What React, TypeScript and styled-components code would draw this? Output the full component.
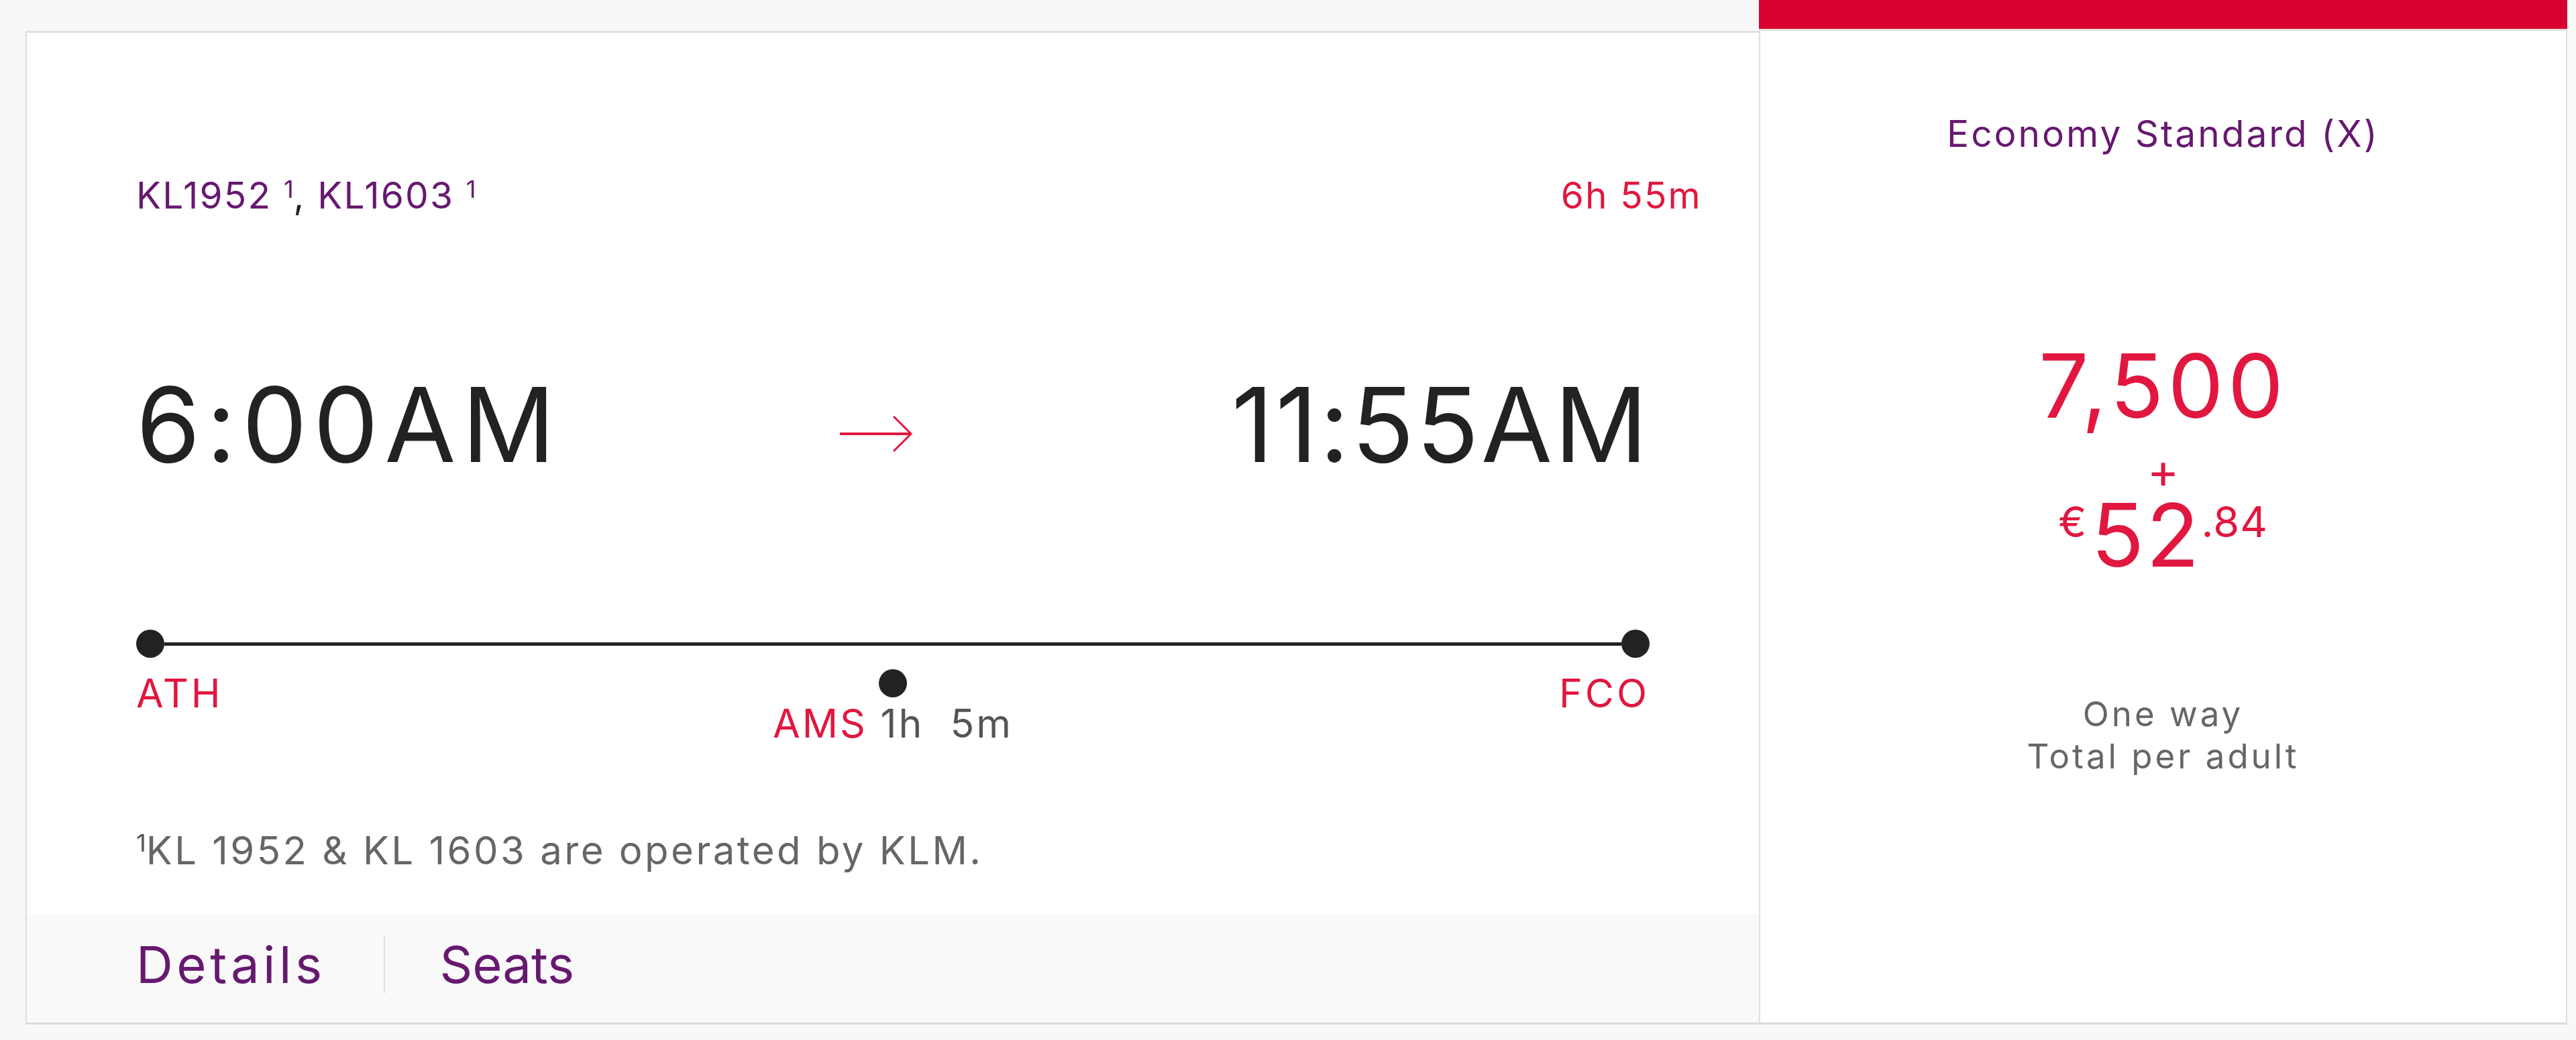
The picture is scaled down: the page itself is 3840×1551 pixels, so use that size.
import React from "react";
import styled, { createGlobalStyle } from "styled-components";

const purple = "#66196f";
const red = "#e1173f";

const GlobalStyle = createGlobalStyle`
  html, body {
    margin: 0;
    padding: 0;
    background: #f8f8f8;
  }
  body {
    font-family: Inter, "Liberation Sans", sans-serif;
  }
`;

const Page = styled.div`
  display: flex;
  align-items: flex-start;
  padding-left: 38px;
  height: 1551px;
  box-sizing: border-box;
`;

const FlightCard = styled.section`
  margin-top: 46px;
  width: 2584px;
  height: 1482px;
  box-sizing: border-box;
  background: #fff;
  border: 2px solid #dcdcdc;
  border-top: 3px solid #e0e0e0;
  border-bottom: 3px solid #dadada;
  border-right: none;
  display: flex;
  flex-direction: column;
`;

const Body = styled.div`
  padding: 215px 163px 0;
  display: flex;
  flex-direction: column;
`;

const HeaderRow = styled.div`
  display: flex;
  justify-content: space-between;
  align-items: flex-start;
  margin-right: -76px;
  font-size: 55px;
  line-height: 1;
  letter-spacing: 2.2px;
`;

const FlightNo = styled.span`
  color: ${purple};
`;

const Comma = styled.span`
  color: #222;
`;

const Sup = styled.sup<{ $color?: string }>`
  font-size: 36px;
  line-height: 1;
  vertical-align: top;
  letter-spacing: 0;
  color: ${(p) => p.$color || purple};
`;

const Duration = styled.span`
  color: ${red};
  margin-right: -2px;
`;

const TimeRow = styled.div`
  display: flex;
  align-items: center;
  justify-content: space-between;
  margin-top: 237px;
`;

const Time = styled.div<{ $spacing: number }>`
  font-size: 154px;
  line-height: 1;
  letter-spacing: ${(p) => p.$spacing}px;
  color: #222;
`;

const ArrowMark = styled.svg`
  flex: none;
  margin: 28px 60px 0 0;
`;

const Track = styled.div`
  display: flex;
  align-items: center;
  margin-top: 229px;
`;

const Dot = styled.span`
  flex: none;
  width: 42px;
  height: 42px;
  border-radius: 50%;
  background: #222;
`;

const TrackLine = styled.span`
  flex: 1;
  height: 5px;
  background: #222;
`;

const Stops = styled.div`
  display: grid;
  grid-template-columns: 1fr auto 1fr;
  align-items: start;
`;

const Airport = styled.span<{ $end?: boolean }>`
  margin-top: 23px;
  font-size: 59px;
  line-height: 1;
  letter-spacing: 4px;
  color: ${red};
  text-align: ${(p) => (p.$end ? "right" : "left")};
`;

const Stopover = styled.div`
  display: flex;
  flex-direction: column;
  align-items: center;
  padding-top: 17px;
`;

const StopLabel = styled.div`
  margin-top: 9px;
  font-size: 59px;
  line-height: 1;
  letter-spacing: 3px;
  color: #555;
  white-space: pre;
`;

const StopCode = styled.span`
  color: ${red};
`;

const Footnote = styled.p`
  margin: 131px 0 0;
  font-size: 58px;
  line-height: 1;
  letter-spacing: 3.5px;
  color: #666;
`;

const Footer = styled.nav`
  margin-top: auto;
  height: 162px;
  box-sizing: border-box;
  padding: 0 0 12px 163px;
  background: #f9f9f9;
  display: flex;
  align-items: center;
`;

const FooterLink = styled.a<{ $spacing: number }>`
  font-size: 76px;
  line-height: 1;
  letter-spacing: ${(p) => p.$spacing}px;
  color: ${purple};
  text-decoration: none;
`;

const Divider = styled.span`
  width: 2px;
  height: 86px;
  background: #dedede;
  margin: 0 82px 0 86px;
`;

const FareColumn = styled.aside`
  width: 1205px;
  display: flex;
  flex-direction: column;
`;

const FareBar = styled.div`
  height: 43px;
  background: #d8002e;
`;

const FarePanel = styled.div`
  height: 1485px;
  box-sizing: border-box;
  background: #fff;
  border: 2px solid #dde0e8;
  border-top: 3px solid #e0e0e0;
  border-bottom: 3px solid #dadada;
  display: flex;
  flex-direction: column;
  align-items: center;
  padding-top: 126px;
  text-align: center;
`;

const FareClass = styled.div`
  font-size: 55px;
  line-height: 1;
  letter-spacing: 3px;
  color: ${purple};
`;

const Points = styled.div`
  margin-top: 282px;
  font-size: 132px;
  line-height: 1;
  letter-spacing: 6px;
  color: ${red};
`;

const Plus = styled.div`
  margin-top: 39px;
  font-size: 72px;
  line-height: 0.6;
  color: ${red};
`;

const Cash = styled.div`
  margin-top: 10px;
  display: flex;
  align-items: flex-start;
  color: ${red};
  line-height: 1;
`;

const CashSmall = styled.span`
  font-size: 63px;
  margin-top: 14px;
  letter-spacing: 1px;
`;

const CashMain = styled.span`
  font-size: 130px;
  letter-spacing: 3px;
  margin-left: 6px;
`;

const Caption = styled.div`
  margin-top: 170px;
  font-size: 51px;
  line-height: 63px;
  letter-spacing: 4px;
  color: #666;
`;

const Arrow = () => (
  <ArrowMark width="112" height="58" viewBox="0 0 112 58" fill="none">
    <path d="M2 29 H108" stroke={red} strokeWidth="4" />
    <path d="M82 3 L108 29 L82 55" stroke={red} strokeWidth="3" />
  </ArrowMark>
);

export default function App() {
  return (
    <>
      <GlobalStyle />
      <Page>
        <FlightCard>
          <Body>
            <HeaderRow>
              <span>
                <FlightNo>KL1952</FlightNo> <Sup>1</Sup>
                <Comma>,</Comma> <FlightNo>KL1603</FlightNo> <Sup>1</Sup>
              </span>
              <Duration>6h 55m</Duration>
            </HeaderRow>
            <TimeRow>
              <Time $spacing={9}>6:00AM</Time>
              <Arrow />
              <Time $spacing={3}>11:55AM</Time>
            </TimeRow>
            <Track>
              <Dot />
              <TrackLine />
              <Dot />
            </Track>
            <Stops>
              <Airport>ATH</Airport>
              <Stopover>
                <Dot />
                <StopLabel>
                  <StopCode>AMS</StopCode> 1h  5m
                </StopLabel>
              </Stopover>
              <Airport $end>FCO</Airport>
            </Stops>
            <Footnote>
              <Sup $color="#555">1</Sup>KL 1952 &amp; KL 1603 are operated by KLM.
            </Footnote>
          </Body>
          <Footer>
            <FooterLink href="#" $spacing={5.5}>Details</FooterLink>
            <Divider />
            <FooterLink href="#" $spacing={0}>Seats</FooterLink>
          </Footer>
        </FlightCard>
        <FareColumn>
          <FareBar />
          <FarePanel>
            <FareClass>Economy Standard (X)</FareClass>
            <Points>7,500</Points>
            <Plus>+</Plus>
            <Cash>
              <CashSmall>€</CashSmall>
              <CashMain>52</CashMain>
              <CashSmall>.84</CashSmall>
            </Cash>
            <Caption>
              One way
              <br />
              Total per adult
            </Caption>
          </FarePanel>
        </FareColumn>
      </Page>
    </>
  );
}
